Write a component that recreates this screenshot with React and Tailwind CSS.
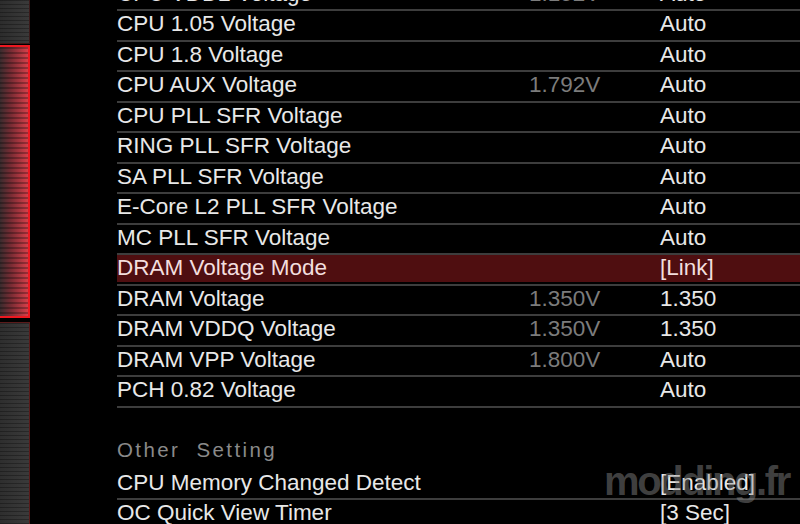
import React from 'react';

const rows = [
    { name: 'CPU VDD2 Voltage', value: '1.152V', setting: 'Auto' },
    { name: 'CPU 1.05 Voltage', value: '', setting: 'Auto' },
    { name: 'CPU 1.8 Voltage', value: '', setting: 'Auto' },
    { name: 'CPU AUX Voltage', value: '1.792V', setting: 'Auto' },
    { name: 'CPU PLL SFR Voltage', value: '', setting: 'Auto' },
    { name: 'RING PLL SFR Voltage', value: '', setting: 'Auto' },
    { name: 'SA PLL SFR Voltage', value: '', setting: 'Auto' },
    { name: 'E-Core L2 PLL SFR Voltage', value: '', setting: 'Auto' },
    { name: 'MC PLL SFR Voltage', value: '', setting: 'Auto' },
    { name: 'DRAM Voltage Mode', value: '', setting: '[Link]', active: true },
    { name: 'DRAM Voltage', value: '1.350V', setting: '1.350' },
    { name: 'DRAM VDDQ Voltage', value: '1.350V', setting: '1.350' },
    { name: 'DRAM VPP Voltage', value: '1.800V', setting: 'Auto' },
    { name: 'PCH 0.82 Voltage', value: '', setting: 'Auto' },
];

const otherRows = [
    { name: 'CPU Memory Changed Detect', setting: '[Enabled]' },
    { name: 'OC Quick View Timer', setting: '[3 Sec]' },
];

const Row = ({ row, noBorder }) => (
    <div className={`h-[30.5px] shrink-0 border-t-2 ${noBorder ? 'border-transparent' : 'border-[#3d3d3d]'}`}>
        <div className={`h-[27px] grid grid-cols-[412px_131px_1fr] text-[22.5px] leading-[26px] ${row.active ? 'bg-[#4f0e10] text-[#f3dede]' : 'text-[#e8e8e8]'}`}>
            <span className="whitespace-nowrap">{row.name}</span>
            <span className="text-[#7c7c7c]">{row.value}</span>
            <span className="whitespace-nowrap">{row.setting}</span>
        </div>
    </div>
);

const Sidebar = () => (
    <aside className="w-[30px] shrink-0 flex flex-col">
        <div className="h-[44px] shrink-0 border-r border-b border-[#3a1a1a] bg-[image:repeating-linear-gradient(180deg,rgba(0,0,0,0.3)_0px,rgba(0,0,0,0.3)_1px,transparent_1px,transparent_4px),linear-gradient(90deg,#2c2c2c,#3a3a3a)]" />
        <div className="h-[273px] shrink-0 mt-[1px] border-t-2 border-r-2 border-b-2 border-[#ec1820] bg-[image:repeating-linear-gradient(180deg,rgba(0,0,0,0.28)_0px,rgba(0,0,0,0.28)_2px,transparent_2px,transparent_5px),linear-gradient(90deg,#3a2c2e,#7a2c34_40%,#d6404a)]" />
        <div className="flex-1 mt-[4px] border-t border-r border-[#5a1a1a] bg-[image:repeating-linear-gradient(180deg,rgba(0,0,0,0.3)_0px,rgba(0,0,0,0.3)_1px,transparent_1px,transparent_4px),linear-gradient(90deg,#2e2e2e,#3a3a3a)]" />
    </aside>
);

const App = () => {
    return (
        <div className="relative w-[800px] h-[524px] overflow-hidden bg-black flex font-['Liberation_Sans',Arial,sans-serif]">
            <Sidebar />
            <main className="ml-[87px] flex-1 flex flex-col -mt-[21.5px]">
                {rows.map((row) => (
                    <Row key={row.name} row={row} />
                ))}
                <div className="h-[62px] shrink-0 border-t-2 border-[#3d3d3d] pt-[29px]">
                    <span className="whitespace-pre text-[20.5px] leading-[26px] tracking-[2.4px] text-[#8a8a8a]">Other  Setting</span>
                </div>
                <Row row={otherRows[0]} noBorder />
                <Row row={otherRows[1]} />
            </main>

            {/* watermark */}
            <div className="absolute left-[604px] top-[461px] text-[40px] leading-[40px] font-bold tracking-[-2.4px] text-[#909090]/45 pointer-events-none">
                modding.fr
            </div>
        </div>
    );
};

export default App;
